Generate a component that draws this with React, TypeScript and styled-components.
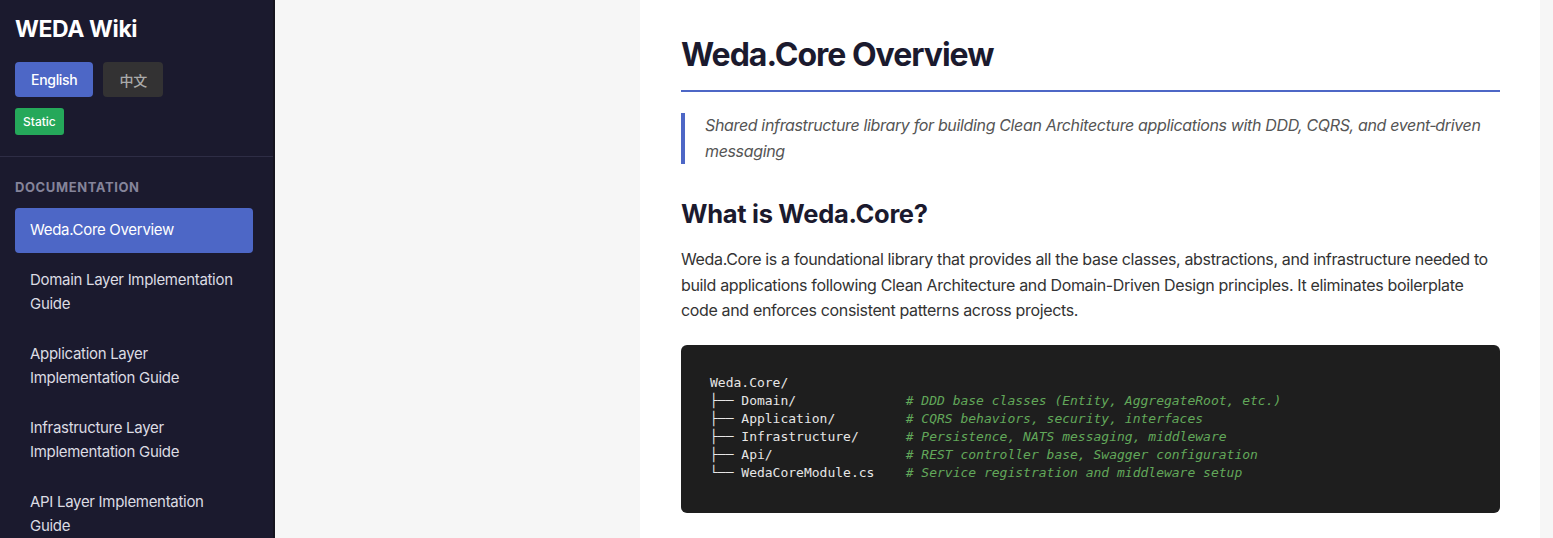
import React from "react";
import styled, {createGlobalStyle} from "styled-components";

const GlobalStyle = createGlobalStyle`
  * { box-sizing: border-box; }
  body {
    margin: 0;
    font-family: Inter, "Noto Sans", "Noto Sans CJK SC", sans-serif;
    background: #f6f6f6;
  }
`;

const Page = styled.div`
  display: flex;
  min-height: 100vh;
`;

const Sidebar = styled.aside`
  width: 275px;
  flex-shrink: 0;
  background: #1b1a2e;
  border-right: 2px solid #15141f;
  color: #fff;
`;

const SidebarHeader = styled.div`
  padding: 15px 15px 21px;
  border-bottom: 1px solid #2e2d45;
`;

const Title = styled.h1`
  margin: 0;
  font-size: 23px;
  line-height: 28px;
  font-weight: 700;
  letter-spacing: -0.4px;
`;

const LangRow = styled.div`
  display: flex;
  gap: 10px;
  margin-top: 19px;
`;

const LangButton = styled.button<{ $active?: boolean }>`
  height: 35px;
  padding: 0 16px;
  border: none;
  border-radius: 4px;
  font-family: Inter, "Noto Sans CJK SC", sans-serif;
  font-size: 14px;
  font-weight: 500;
  letter-spacing: -0.3px;
  background: ${p => (p.$active ? "#4d67c6" : "#333233")};
  color: ${p => (p.$active ? "#fff" : "#aaa")};
`;

const Badge = styled.span`
  display: inline-flex;
  align-items: center;
  height: 27px;
  margin-top: 11px;
  padding: 0 8px;
  border-radius: 3px;
  background: #25a85a;
  color: #fff;
  font-size: 12px;
  font-weight: 500;
`;

const Nav = styled.nav`
  padding: 22px 20px 15px 15px;
`;

const NavLabel = styled.div`
  font-size: 13px;
  line-height: 16px;
  font-weight: 700;
  letter-spacing: 0.6px;
  text-transform: uppercase;
  color: #85849a;
  margin-bottom: 13px;
`;

const NavItem = styled.a<{ $active?: boolean }>`
  display: block;
  padding: 10px 15px;
  margin-bottom: 5px;
  border-radius: 4px;
  font-size: 15px;
  line-height: 24.5px;
  letter-spacing: -0.3px;
  color: ${p => (p.$active ? "#fff" : "#dcdce3")};
  background: ${p => (p.$active ? "#4d67c6" : "transparent")};
  text-decoration: none;
`;

const Main = styled.main`
  flex: 1;
  display: flex;
  justify-content: flex-end;
  padding-right: 13px;
  background: #f6f6f6;
`;

const Article = styled.article`
  width: 900px;
  background: #fff;
  padding: 36px 40px 40px 41px;
  color: #333;
`;

const Heading = styled.h1`
  margin: 0;
  padding-bottom: 16px;
  border-bottom: 2px solid #4d67c6;
  font-size: 32px;
  line-height: 38px;
  font-weight: 700;
  color: #1b1a2e;
  letter-spacing: -1px;
`;

const Lead = styled.blockquote`
  margin: 21px 0 0;
  padding: 0 0 0 20px;
  border-left: 4px solid #4d67c6;
  font-size: 16px;
  line-height: 25.6px;
  font-style: italic;
  letter-spacing: -0.35px;
  color: #555;
`;

const SubHeading = styled.h2`
  margin: 34px 0 0;
  font-size: 25.5px;
  line-height: 31px;
  font-weight: 700;
  letter-spacing: -0.3px;
  color: #1b1a2e;
`;

const Paragraph = styled.p`
  margin: 18px 0 0;
  font-size: 16px;
  line-height: 25.6px;
  letter-spacing: -0.35px;
  color: #333;
`;

const CodeBlock = styled.pre`
  margin: 21px 0 0;
  padding: 29px 29px 31px;
  background: #1e1e1e;
  border-radius: 6px;
  font-family: "DejaVu Sans Mono", "Liberation Mono", monospace;
  font-size: 13px;
  line-height: 18px;
  color: #e6e6e6;
  overflow: hidden;
`;

const Comment = styled.span`
  color: #62a85a;
  font-style: italic;
`;

const navItems = [
  "Weda.Core Overview",
  "Domain Layer Implementation Guide",
  "Application Layer Implementation Guide",
  "Infrastructure Layer Implementation Guide",
  "API Layer Implementation Guide",
];

const tree = [
  {path: "├── Domain/", note: "# DDD base classes (Entity, AggregateRoot, etc.)"},
  {path: "├── Application/", note: "# CQRS behaviors, security, interfaces"},
  {path: "├── Infrastructure/", note: "# Persistence, NATS messaging, middleware"},
  {path: "├── Api/", note: "# REST controller base, Swagger configuration"},
  {path: "└── WedaCoreModule.cs", note: "# Service registration and middleware setup"},
];

const App = () => {
  return (
    <>
      <GlobalStyle/>
      <Page>
        <Sidebar>
          <SidebarHeader>
            <Title>WEDA Wiki</Title>
            <LangRow>
              <LangButton $active>English</LangButton>
              <LangButton>中文</LangButton>
            </LangRow>
            <Badge>Static</Badge>
          </SidebarHeader>
          <Nav>
            <NavLabel>Documentation</NavLabel>
            {navItems.map((item, idx) => (
              <NavItem key={item} href="#" $active={idx === 0}>{item}</NavItem>
            ))}
          </Nav>
        </Sidebar>
        <Main>
          <Article>
            <Heading>Weda.Core Overview</Heading>
            <Lead>
              Shared infrastructure library for building Clean Architecture applications with DDD, CQRS, and event&#8209;driven messaging
            </Lead>
            <SubHeading>What is Weda.Core?</SubHeading>
            <Paragraph>
              Weda.Core is a foundational library that provides all the base classes, abstractions, and infrastructure needed to build applications following Clean Architecture and Domain-Driven Design principles. It eliminates boilerplate code and enforces consistent patterns across projects.
            </Paragraph>
            <CodeBlock>
              {"Weda.Core/\n"}
              {tree.map(row => (
                <React.Fragment key={row.path}>
                  {row.path.padEnd(25, " ")}
                  <Comment>{row.note}</Comment>
                  {"\n"}
                </React.Fragment>
              ))}
            </CodeBlock>
          </Article>
        </Main>
      </Page>
    </>
  );
};

export default App;
